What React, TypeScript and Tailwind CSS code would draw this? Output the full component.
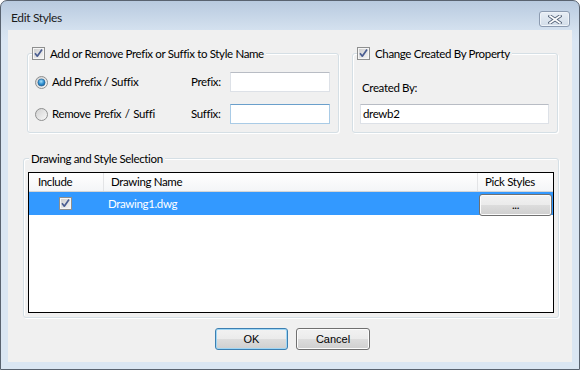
import React from "react";

function CheckBox({ id }: { id: string }) {
  return (
    <svg width="13" height="13" viewBox="0 0 13 13" className="shrink-0">
      <defs>
        <linearGradient id={id} x1="0" y1="0" x2="1" y2="1">
          <stop offset="0" stopColor="#cfcfcf" />
          <stop offset="1" stopColor="#f4f4f4" />
        </linearGradient>
      </defs>
      <rect x="0.5" y="0.5" width="12" height="12" fill="#f6f6f6" stroke="#8e8f8f" />
      <rect x="2" y="2" width="9" height="9" fill={`url(#${id})`} />
      <path d="M3 6.3 L5.3 9.2 L10 2.6" stroke="#4a5d91" strokeWidth="1.7" fill="none" strokeLinejoin="round" />
    </svg>
  );
}

function Radio({ on, id }: { on?: boolean; id: string }) {
  return (
    <svg width="13" height="13" viewBox="0 0 13 13" className="shrink-0">
      <defs>
        <linearGradient id={`${id}b`} x1="0" y1="0" x2="1" y2="1">
          <stop offset="0" stopColor="#cfcfcf" />
          <stop offset="1" stopColor="#fafafa" />
        </linearGradient>
        <radialGradient id={`${id}d`} cx="0.45" cy="0.35" r="0.7">
          <stop offset="0" stopColor="#a5e0fb" />
          <stop offset="0.55" stopColor="#2f8fd0" />
          <stop offset="1" stopColor="#1b5e97" />
        </radialGradient>
      </defs>
      <circle cx="6.5" cy="6.5" r="6" fill={`url(#${id}b)`} stroke="#8e8f8f" />
      {on && <circle cx="6.5" cy="6.5" r="3.6" fill={`url(#${id}d)`} stroke="#235d8c" strokeWidth="0.6" />}
    </svg>
  );
}

function Input({ value, focus }: { value?: string; focus?: boolean }) {
  return (
    <div
      className={
        "h-[20px] bg-white border flex items-center pl-[2px] text-black " +
        (focus
          ? "border-[#a9cbe6] border-t-[#6a9fcb]"
          : "border-[#dde1e7] border-t-[#b8bcc4]")
      }
    >
      {value}
    </div>
  );
}

function WinButton({ label, def, className }: { label: string; def?: boolean; className?: string }) {
  return (
    <div
      className={
        "h-[22px] rounded-[3px] border flex items-center justify-center text-black bg-[linear-gradient(to_bottom,#f2f2f2_0%,#ebebeb_50%,#dddddd_50%,#cfcfcf_100%)] " +
        (def
          ? "border-[#3c7fb1] shadow-[inset_0_0_0_1px_#9fd6f5]"
          : "border-[#707070] shadow-[inset_0_0_0_1px_#fcfcfc]") +
        " " +
        (className ?? "")
      }
    >
      {label}
    </div>
  );
}

export default function App() {
  return (
    <div className="w-[580px] h-[370px] font-['Lato',sans-serif] text-[11.5px] leading-none tracking-[-0.35px] text-black">
      <div className="flex h-full w-full flex-col rounded-t-[7px] border border-[#596370] bg-[linear-gradient(to_bottom,#b8cadf_0px,#d4e1ef_29px,#dae6f3_40px,#dae6f3_100%)]">
        {/* Title bar */}
        <div className="flex h-[29px] shrink-0 items-start">
          <div className="pl-[10px] pt-[11px] text-[12px] text-[#1b1b1b]">Edit Styles</div>
          <div className="ml-auto mr-[9px] mt-[10px] flex h-[16px] w-[31px] items-center justify-center rounded-[3px] border border-[#8c9bb0] bg-[linear-gradient(to_bottom,#e8eef5,#d2dde9)] shadow-[inset_0_0_0_1px_#eef3f8]">
            <svg width="14" height="9" viewBox="0 0 14 9">
              <path d="M2 1 L12 8 M2 8 L12 1" stroke="#56657a" strokeWidth="3.4" strokeLinecap="square" />
              <path d="M2 1 L12 8 M2 8 L12 1" stroke="#ffffff" strokeWidth="1.6" strokeLinecap="square" />
            </svg>
          </div>
        </div>

        {/* Client area */}
        <div className="mx-[7px] mb-[7px] flex flex-1 flex-col bg-[#f0f0f0] pl-[15px] pt-[23px]">
          {/* top groups */}
          <div className="flex">
            {/* Group 1 */}
            <div className="relative ml-[4px] h-[80px] w-[312px] rounded-[3px] border border-[#d5dfe5] shadow-[inset_1px_1px_0_#ffffff,1px_1px_0_#ffffff]">
              <div className="absolute left-[4px] top-[-7px] flex items-center gap-[5px] bg-[#f0f0f0] pr-[2px]">
                <CheckBox id="cb1" />
                <span className="leading-[13px]">Add or Remove Prefix or Suffix to Style Name</span>
              </div>
              <div className="flex flex-col gap-[12px] pl-[7px] pt-[18px]">
                <div className="flex h-[20px] items-center">
                  <div className="flex w-[156px] items-center gap-[4px]">
                    <Radio on id="r1" />
                    <span>Add Prefix / Suffix</span>
                  </div>
                  <span className="w-[39px]">Prefix:</span>
                  <div className="w-[100px]">
                    <Input />
                  </div>
                </div>
                <div className="flex h-[20px] items-center">
                  <div className="flex w-[156px] items-center gap-[4px]">
                    <Radio id="r2" />
                    <span className="[word-spacing:1px]">Remove Prefix / Suffi</span>
                  </div>
                  <span className="w-[39px]">Suffix:</span>
                  <div className="w-[100px]">
                    <Input focus />
                  </div>
                </div>
              </div>
            </div>

            {/* Group 2 */}
            <div className="relative ml-[13px] h-[80px] w-[206px] rounded-[3px] border border-[#d5dfe5] shadow-[inset_1px_1px_0_#ffffff,1px_1px_0_#ffffff]">
              <div className="absolute left-[4px] top-[-7px] flex items-center gap-[5px] bg-[#f0f0f0] pr-[2px]">
                <CheckBox id="cb2" />
                <span className="leading-[13px]">Change Created By Property</span>
              </div>
              <div className="flex flex-col pl-[7px] pt-[26px]">
                <div className="flex h-[16px] items-center pl-[2px]">Created By:</div>
                <div className="mt-[8px] w-[189px]">
                  <Input value="drewb2" />
                </div>
              </div>
            </div>
          </div>

          {/* Group 3 */}
          <div className="relative mt-[25px] h-[160px] w-[536px] rounded-[3px] border border-[#d5dfe5] shadow-[inset_1px_1px_0_#ffffff,1px_1px_0_#ffffff]">
            <div className="absolute left-[5px] top-[-8px] flex h-[16px] items-center bg-[#f0f0f0] px-[2px]">
              Drawing and Style Selection
            </div>
            <div className="pl-[4px] pt-[13px]">
              <div className="flex h-[141px] w-[526px] flex-col border border-black bg-white">
                {/* header */}
                <div className="flex h-[19px] shrink-0 border-b border-[#d5d5d5] bg-[linear-gradient(to_bottom,#ffffff,#f4f5f7)]">
                  <div className="flex w-[75px] items-center border-r border-[#e3e4e6] pl-[9px]">Include</div>
                  <div className="flex w-[374px] items-center border-r border-[#e3e4e6] pl-[7px]">Drawing Name</div>
                  <div className="flex flex-1 items-center pl-[7px]">Pick Styles</div>
                </div>
                {/* row */}
                <div className="flex h-[23px] bg-[#3399ff] text-white">
                  <div className="flex w-[75px] items-center justify-center pr-[2px]">
                    <CheckBox id="cb3" />
                  </div>
                  <div className="flex w-[374px] items-center pl-[4px]">Drawing1.dwg</div>
                  <div className="flex-1 px-[1px] pt-[2px]">
                    <WinButton label="..." className="h-[20px]" />
                  </div>
                </div>
              </div>
            </div>
          </div>

          {/* buttons */}
          <div className="-ml-[15px] mt-[10px] flex justify-center gap-[8px] pl-[5px]">
            <WinButton label="OK" def className="w-[73px] font-['Liberation_Sans',sans-serif] text-[11px] tracking-normal" />
            <WinButton label="Cancel" className="w-[74px] font-['Liberation_Sans',sans-serif] text-[11px] tracking-normal" />
          </div>
        </div>
      </div>
    </div>
  );
}
